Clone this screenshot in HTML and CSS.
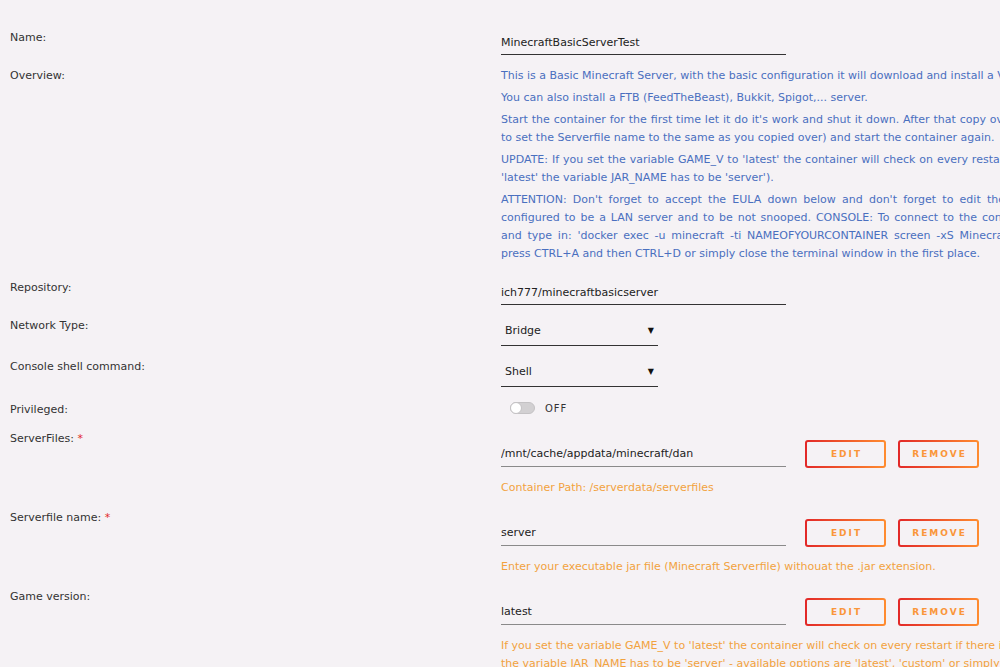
FILE: index.html
```html
<!DOCTYPE html>
<html>
  <head>
    <title>Update Container</title>
    <link rel="stylesheet" href="styles.css">
  </head>

  <body>
    <main class="form">
      <div class="row">
        <div class="label">Name:</div>
        <div class="value">
          <input class="text" type="text" value="MinecraftBasicServerTest">
        </div>
      </div>

      <div class="row">
        <div class="label">Overview:</div>
        <div class="value overview">
          <p>This is a Basic Minecraft Server, with the basic configuration it will download and install a Vanilla Minecraft.</p>
          <p>You can also install a FTB (FeedTheBeast), Bukkit, Spigot,... server.</p>
          <p>
            <span class="ws-1">Start the container for the first time let it do it's work and shut it down. After that copy over your favorite server executable (don't forget</span>
            <span>to set the Serverfile name to the same as you copied over) and start the container again.</span>
          </p>
          <p>
            <span class="ws-1">UPDATE: If you set the variable GAME_V to 'latest' the container will check on every restart if there is a newer version available (if set to</span>
            <span>'latest' the variable JAR_NAME has to be 'server').</span>
          </p>
          <p>
            <span class="ws-4">ATTENTION: Don't forget to accept the EULA down below and don't forget to edit the 'server.properties' file the server is by default</span>
            <span class="ws-2">configured to be a LAN server and to be not snooped. CONSOLE: To connect to the console open up the terminal on the host</span>
            <span class="ws-3">and type in: 'docker exec -u minecraft -ti NAMEOFYOURCONTAINER screen -xS Minecraft' (case sensitive) to disconnect simply</span>
            <span>press CTRL+A and then CTRL+D or simply close the terminal window in the first place.</span>
          </p>
        </div>
      </div>

      <div class="row">
        <div class="label">Repository:</div>
        <div class="value">
          <input class="text" type="text" value="ich777/minecraftbasicserver">
        </div>
      </div>

      <div class="row">
        <div class="label">Network Type:</div>
        <div class="value">
          <div class="select"><span>Bridge</span><span class="caret">&#9660;</span></div>
        </div>
      </div>

      <div class="row">
        <div class="label">Console shell command:</div>
        <div class="value">
          <div class="select"><span>Shell</span><span class="caret">&#9660;</span></div>
        </div>
      </div>

      <div class="row">
        <div class="label short">Privileged:</div>
        <div class="value switch-line">
          <span class="switch"><span class="knob"></span></span>
          <span class="switch-text">OFF</span>
        </div>
      </div>

      <div class="row">
        <div class="label">ServerFiles: <span class="req">*</span></div>
        <div class="value">
          <div class="config">
            <input class="text path" type="text" value="/mnt/cache/appdata/minecraft/dan">
            <button class="btn edit">EDIT</button>
            <button class="btn">REMOVE</button>
          </div>
          <div class="help">Container Path: /serverdata/serverfiles</div>
        </div>
      </div>

      <div class="row">
        <div class="label">Serverfile name: <span class="req">*</span></div>
        <div class="value">
          <div class="config">
            <input class="text path" type="text" value="server">
            <button class="btn edit">EDIT</button>
            <button class="btn">REMOVE</button>
          </div>
          <div class="help">Enter your executable jar file (Minecraft Serverfile) withouat the .jar extension.</div>
        </div>
      </div>

      <div class="row">
        <div class="label">Game version:</div>
        <div class="value">
          <div class="config">
            <input class="text path" type="text" value="latest">
            <button class="btn edit">EDIT</button>
            <button class="btn">REMOVE</button>
          </div>
          <div class="help">
            <span class="hl">If you set the variable GAME_V to 'latest' the container will check on every restart if there is a newer version available (if set to 'latest'</span>
            <span class="hl">the variable JAR_NAME has to be 'server' - available options are 'latest', 'custom' or simply the version number.</span>
          </div>
        </div>
      </div>
    </main>
  </body>
</html>
```

FILE: styles.css
```css
body {
  margin: 0;
  background: #f5f2f5;
  font-family: "DejaVu Sans", sans-serif;
  font-size: 11px;
  color: #303030;
  overflow: hidden;
}
.form {
  padding: 28px 0 0 10px;
  display: flex;
  flex-direction: column;
  gap: 11px;
}
.row {
  display: grid;
  grid-template-columns: 491px 1fr;
}
.label {
  padding-top: 1px;
  line-height: 18px;
  color: #333;
}
.label.short {
  padding-top: 4px;
  line-height: 16px;
}
.req {
  color: #e22828;
}
.value {
  min-width: 0;
}
input.text {
  display: block;
  width: 285px;
  box-sizing: border-box;
  margin: 2px 0 0 0;
  padding: 3px 0;
  border: 0;
  border-bottom: 1px solid #333;
  background: transparent;
  font-family: inherit;
  font-size: 11px;
  line-height: 18px;
  height: 25px;
  color: #222;
  outline: none;
}

/* description: one block per wrapped line, spread out like justified text */
.overview {
  padding-top: 1px;
  color: #4a6fbf;
}
.overview p {
  margin: 0 0 4px 0;
  line-height: 18px;
  white-space: nowrap;
}
.overview span {
  display: block;
}
.ws-1 { word-spacing: 0.4px; }
.ws-2 { word-spacing: 1.4px; }
.ws-3 { word-spacing: 2.3px; }
.ws-4 { word-spacing: 2.7px; }

.select {
  display: flex;
  justify-content: space-between;
  align-items: center;
  width: 157px;
  box-sizing: border-box;
  padding: 6px 4px 5px 4px;
  line-height: 18px;
  border-bottom: 1px solid #333;
  color: #222;
}
.caret {
  font-size: 8px;
  color: #111;
}
.switch-line {
  display: flex;
  align-items: center;
  gap: 10px;
  padding-left: 9px;
  height: 20px;
}
.switch {
  position: relative;
  width: 25px;
  height: 12px;
  box-sizing: border-box;
  border-radius: 6px;
  background: #d2d0d2;
  border: 1px solid #c4c2c4;
}
.knob {
  position: absolute;
  left: -1px;
  top: -1px;
  width: 12px;
  height: 12px;
  box-sizing: border-box;
  border-radius: 50%;
  background: #fff;
  border: 1px solid #c4c2c4;
}
.switch-text {
  font-size: 10px;
  letter-spacing: 1px;
  color: #333;
}
.config {
  display: flex;
  align-items: center;
  margin-top: 11px;
}
input.path {
  margin: 0 19px 0 0;
  border-bottom-color: #8a8a8a;
}
.btn {
  width: 81px;
  height: 28px;
  margin-right: 12px;
  border: 2px solid transparent;
  border-radius: 3px;
  background: linear-gradient(#f5f2f5, #f5f2f5) padding-box,
    linear-gradient(90deg, #e22828, #ff8c2f) border-box;
  color: #fa963a;
  font-family: inherit;
  font-size: 9px;
  font-weight: bold;
  letter-spacing: 2px;
  padding: 0 0 0 2px;
  cursor: pointer;
}
.help {
  margin-top: 11px;
  line-height: 18px;
  color: #f2a23e;
  white-space: nowrap;
}
.help .hl {
  display: block;
}
```
